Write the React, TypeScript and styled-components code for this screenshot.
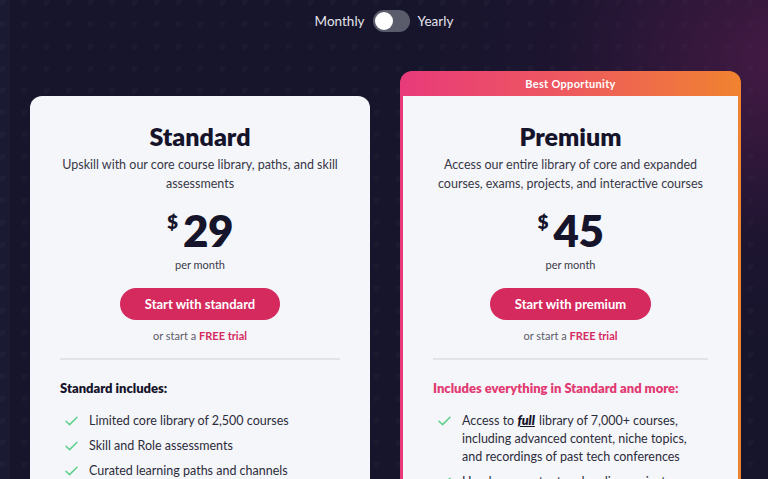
import React from "react";
import styled, { createGlobalStyle } from "styled-components";

const Global = createGlobalStyle`
  html, body { margin: 0; padding: 0; }
  body {
    width: 768px;
    height: 479px;
    overflow: hidden;
    font-family: "Lato", "Noto Sans", sans-serif;
    background: #16152b;
  }
`;

const Page = styled.div`
  position: relative;
  width: 768px;
  height: 479px;
  overflow: hidden;
  background:
    radial-gradient(ellipse 380px 300px at 790px 60px, rgba(110, 30, 90, 0.55), rgba(60, 20, 70, 0.2) 60%, transparent 100%),
    radial-gradient(circle at 1px 1px, rgba(255,255,255,0.025) 4px, transparent 5px) 0 0 / 22px 22px,
    linear-gradient(90deg, #1b1a33 0 10px, #16152b 10px);
  display: flex;
  flex-direction: column;
  align-items: center;
`;

const ToggleRow = styled.div`
  display: flex;
  align-items: center;
  gap: 8px;
  margin-top: 10px;
  height: 23px;
  color: #e4e4ec;
  font-size: 13.5px;
`;

const Track = styled.div`
  width: 37px;
  height: 22px;
  border-radius: 11px;
  background: #5b5c6b;
  display: flex;
  align-items: center;
  padding: 0 2px;
  box-sizing: border-box;
`;

const Knob = styled.div`
  width: 18px;
  height: 18px;
  border-radius: 50%;
  background: #ffffff;
`;

const Cards = styled.div`
  display: flex;
  gap: 30px;
  margin-top: 39px;
  align-items: flex-start;
  padding-left: 3px;
`;

const Card = styled.div`
  width: 340px;
  box-sizing: border-box;
  background: #f5f6fa;
  border-radius: 12px;
  margin-top: 25px;
  padding: 23px 30px 30px;
  height: 420px;
`;

const FeaturedOuter = styled.div`
  width: 341px;
  box-sizing: border-box;
  border-radius: 12px;
  background: linear-gradient(90deg, #e83a7a 0%, #ee5a5e 50%, #f0832f 100%);
  padding: 0 3px;
  display: flex;
  flex-direction: column;
`;

const Banner = styled.div`
  flex: 0 0 25px;
  display: flex;
  align-items: center;
  justify-content: center;
  color: #fff;
  font-weight: 700;
  font-size: 11px;
  letter-spacing: 0.3px;
`;

const FeaturedInner = styled.div`
  height: 420px;
  box-sizing: border-box;
  background: #f5f6fa;
  padding: 23px 30px 30px;
`;

const Title = styled.h2`
  margin: 0;
  text-align: center;
  font-size: 25px;
  font-weight: 800;
  color: #15142a;
  line-height: 34px;
`;

const Desc = styled.p`
  margin: 2px 0 0;
  text-align: center;
  font-size: 12.5px;
  line-height: 19px;
  color: #383846;
`;

const PriceRow = styled.div`
  display: flex;
  justify-content: center;
  align-items: flex-start;
  margin-top: 15px;
  color: #15142a;
  font-weight: 800;
`;

const Dollar = styled.span`
  font-size: 19px;
  line-height: 22px;
  margin-right: 5px;
  margin-top: 3px;
`;

const Amount = styled.span`
  font-size: 44px;
  line-height: 44px;
  letter-spacing: -0.5px;
`;

const Per = styled.div`
  text-align: center;
  font-size: 11px;
  color: #3a3a48;
  margin-top: 6px;
`;

const Cta = styled.button`
  display: block;
  margin: 17px auto 0;
  height: 32px;
  padding: 0 25px;
  border: none;
  border-radius: 16px;
  background: #d42a5e;
  color: #fff;
  font-family: inherit;
  font-weight: 700;
  font-size: 13px;
`;

const Trial = styled.div`
  text-align: center;
  font-size: 11px;
  color: #5c5c68;
  margin-top: 9px;
  b { color: #d42a5e; font-weight: 700; }
`;

const Divider = styled.hr`
  border: none;
  border-top: 2px solid #e2e3e8;
  margin: 16px 0 0;
`;

const ListHeading = styled.div<{ $accent?: boolean }>`
  margin-top: 20px;
  font-size: 13px;
  font-weight: 800;
  color: ${(p) => (p.$accent ? "#e23a72" : "#15142a")};
`;

const List = styled.ul`
  list-style: none;
  margin: 16px 0 0;
  padding: 0;
  display: flex;
  flex-direction: column;
  gap: 7px;
`;

const Item = styled.li`
  display: flex;
  gap: 11px;
  font-size: 12.5px;
  line-height: 18px;
  color: #2c2c3a;
  padding-left: 5px;
`;

const Strong = styled.em`
  font-weight: 800;
  text-decoration: underline;
  color: #15142a;
  padding-right: 1px;
`;

const CheckBox = styled.span`
  flex: 0 0 13px;
  height: 18px;
  display: flex;
  align-items: center;
`;

const Check = () => (
  <CheckBox>
    <svg width="13" height="10" viewBox="0 0 13 10" fill="none">
      <path d="M1 5.2 L4.6 8.6 L12 1.2" stroke="#5fcf8c" strokeWidth="1.5" strokeLinecap="round" strokeLinejoin="round" />
    </svg>
  </CheckBox>
);

export default function App() {
  return (
    <Page>
      <Global />
      <ToggleRow>
        <span>Monthly</span>
        <Track><Knob /></Track>
        <span>Yearly</span>
      </ToggleRow>
      <Cards>
        <Card>
          <Title>Standard</Title>
          <Desc>Upskill with our core course library, paths, and skill assessments</Desc>
          <PriceRow><Dollar>$</Dollar><Amount>29</Amount></PriceRow>
          <Per>per month</Per>
          <Cta>Start with standard</Cta>
          <Trial>or start a <b>FREE trial</b></Trial>
          <Divider />
          <ListHeading>Standard includes:</ListHeading>
          <List>
            <Item><Check />Limited core library of 2,500 courses</Item>
            <Item><Check />Skill and Role assessments</Item>
            <Item><Check />Curated learning paths and channels</Item>
          </List>
        </Card>
        <FeaturedOuter>
          <Banner>Best Opportunity</Banner>
          <FeaturedInner>
            <Title>Premium</Title>
            <Desc>Access our entire library of core and expanded courses, exams, projects, and interactive courses</Desc>
            <PriceRow><Dollar>$</Dollar><Amount>45</Amount></PriceRow>
            <Per>per month</Per>
            <Cta>Start with premium</Cta>
            <Trial>or start a <b>FREE trial</b></Trial>
            <Divider />
            <ListHeading $accent>Includes everything in Standard and more:</ListHeading>
            <List>
              <Item><Check /><span>Access to <Strong>full</Strong> library of 7,000+ courses, including advanced content, niche topics, and recordings of past tech conferences</span></Item>
              <Item><Check /><span>Hands-on content and coding projects</span></Item>
            </List>
          </FeaturedInner>
        </FeaturedOuter>
      </Cards>
    </Page>
  );
}
